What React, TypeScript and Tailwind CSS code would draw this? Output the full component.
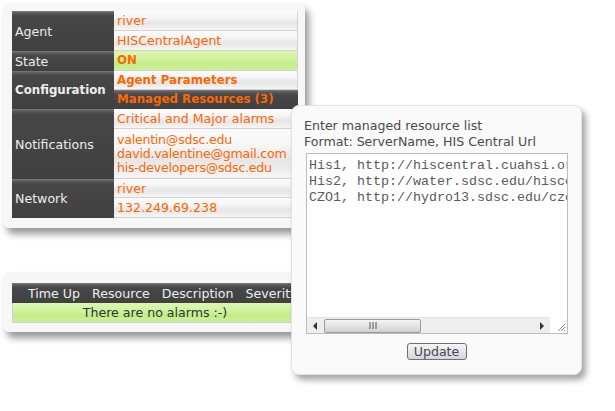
import React from "react";

const darkBg =
  "bg-[linear-gradient(#7c7c7c_0px,#5a5a5a_2px,#474747_5px,#404040_100%)]";
const lightBg =
  "bg-[linear-gradient(#fbfbfb_0%,#f6f6f6_35%,#e6e6e6_60%,#ececec_80%,#f6f6f6_100%)]";
const greenBg =
  "bg-[linear-gradient(#dcf8b0_0%,#d2f4a0_35%,#c4ec8a_65%,#cdf197_100%)]";

function Cell({
  children,
  h = "h-[20px]",
  extra = "",
}: {
  children: React.ReactNode;
  h?: string;
  extra?: string;
}) {
  return (
    <div
      className={`${h} flex items-center pl-[3px] border-b border-r border-[#d2d2d2] ${lightBg} text-[#ff6600] ${extra}`}
    >
      {children}
    </div>
  );
}

function Group({
  label,
  bold,
  children,
}: {
  label: string;
  bold?: boolean;
  children: React.ReactNode;
}) {
  return (
    <div className="flex">
      <div
        className={`w-[102px] shrink-0 flex items-center pl-[3px] text-[#eeeeee] ${darkBg} ${
          bold ? "font-bold text-[11.8px]" : ""
        }`}
      >
        {label}
      </div>
      <div className="flex-1 flex flex-col">{children}</div>
    </div>
  );
}

export default function App() {
  return (
    <div className="relative w-[615px] h-[411px] bg-white overflow-hidden font-['DejaVu_Sans','Verdana',sans-serif] text-[12.6px] leading-[15px]">
      {/* Top panel */}
      <div className="ml-[3px] mt-[3px] w-[302px] rounded-[6px] bg-[#f7f7f7] pt-[8px] pl-[9px] pr-[7px] pb-[10px] shadow-[4px_6px_7px_rgba(0,0,0,0.4)]">
        <div className="flex flex-col">
          <Group label="Agent">
            <Cell>river</Cell>
            <Cell>HISCentralAgent</Cell>
          </Group>
          <Group label="State">
            <div
              className={`h-[20px] flex items-center pl-[3px] border-b border-r border-[#d2d2d2] ${greenBg} text-[#ff6600] font-bold text-[11.8px]`}
            >
              ON
            </div>
          </Group>
          <Group label="Configuration" bold>
            <Cell h="h-[19px]" extra="font-bold text-[11.8px]">
              Agent Parameters
            </Cell>
            <div
              className={`h-[19px] flex items-center pl-[3px] ${darkBg} text-[#ff6600] font-bold text-[11.8px]`}
            >
              Managed Resources (3)
            </div>
          </Group>
          <Group label="Notifications">
            <Cell>Critical and Major alarms</Cell>
            <div
              className={`h-[50px] flex flex-col justify-center pl-[3px] border-b border-r border-[#d2d2d2] ${lightBg} text-[#ff6600] leading-[14px] tracking-[-0.25px] whitespace-nowrap`}
            >
              <span>valentin@sdsc.edu</span>
              <span>david.valentine@gmail.com</span>
              <span>his-developers@sdsc.edu</span>
            </div>
          </Group>
          <Group label="Network">
            <Cell h="h-[19px]">river</Cell>
            <Cell>132.249.69.238</Cell>
          </Group>
        </div>
      </div>

      {/* Bottom panel */}
      <div className="ml-[3px] mt-[44px] w-[302px] rounded-[6px] bg-[#f7f7f7] pt-[11px] pl-[9px] pr-[7px] pb-[9px] shadow-[4px_6px_7px_rgba(0,0,0,0.4)]">
        <div
          className={`h-[20px] flex items-center pl-[16px] gap-[12px] whitespace-nowrap overflow-hidden text-[#eeeeee] ${darkBg}`}
        >
          <span>Time Up</span>
          <span>Resource</span>
          <span>Description</span>
          <span>Severity</span>
        </div>
        <div
          className={`h-[20px] flex items-center justify-center border-b border-r border-l border-[#cfcfcf] ${greenBg} text-[#23393a]`}
        >
          There are no alarms :-)
        </div>
      </div>

      {/* Popup */}
      <div className="absolute left-[291px] top-[105px] w-[291px] h-[270px] rounded-[8px] bg-[#fafafa] border border-[#e2e2e2] shadow-[4px_5px_6px_rgba(0,0,0,0.35)] flex flex-col items-center">
        <div className="self-stretch pl-[12px] pt-[12px] text-[#4a4a4a] leading-[16px]">
          <div>Enter managed resource list</div>
          <div>Format: ServerName, HIS Central Url</div>
        </div>
        <div className="self-start ml-[14px] mt-[3px] w-[262px] h-[181px] border border-[#bcbcbc] bg-white flex flex-col">
          <div className="flex-1 overflow-hidden pl-[2px] pt-[4px] font-['Liberation_Mono','Courier_New',monospace] text-[13.33px] leading-[16px] text-[#5a5a5a] whitespace-pre">
            <div>His1, http://hiscentral.cuahsi.org/webservices/hiscentral.asmx</div>
            <div>His2, http://water.sdsc.edu/hiscentral/webservices/hiscentral.asmx</div>
            <div>CZO1, http://hydro13.sdsc.edu/czo/webservices/hiscentral.asmx</div>
          </div>
          <div className="h-[16px] flex">
            <div className="flex-1 flex items-center bg-[#eeeeee] border-t border-[#e4e4e4]">
              <div className="w-[17px] h-full flex items-center justify-center">
                <svg width="5" height="8" viewBox="0 0 5 8">
                  <path d="M4 0 L0 4 L4 8 Z" fill="#333" />
                </svg>
              </div>
              <div className="w-[97px] h-[14px] rounded-[2px] border border-[#9a9a9a] bg-[linear-gradient(#f4f4f4,#e2e2e2_55%,#d0d0d0)] flex items-center justify-center">
                <svg width="8" height="7" viewBox="0 0 8 7">
                  <path d="M1 0 V7 M4 0 V7 M7 0 V7" stroke="#555" strokeWidth="1" />
                </svg>
              </div>
              <div className="flex-1" />
              <div className="w-[17px] h-full flex items-center justify-center">
                <svg width="5" height="8" viewBox="0 0 5 8">
                  <path d="M1 0 L5 4 L1 8 Z" fill="#333" />
                </svg>
              </div>
            </div>
            <div className="w-[17px] bg-white flex items-end justify-end pr-[1px] pb-[1px]">
              <svg width="10" height="10" viewBox="0 0 10 10">
                <path d="M9 2 L2 9 M9 5 L5 9 M9 8 L8 9" stroke="#888" strokeWidth="1" />
              </svg>
            </div>
          </div>
        </div>
        <button className="mt-[9px] w-[60px] h-[17px] rounded-[3px] border border-[#707070] bg-[linear-gradient(#f6f6f6,#e6e6e6_50%,#d6d6d6)] text-[#3e4a5a] text-[12.6px] leading-[14px] flex items-center justify-center font-['DejaVu_Sans',sans-serif]">
          Update
        </button>
      </div>
    </div>
  );
}
